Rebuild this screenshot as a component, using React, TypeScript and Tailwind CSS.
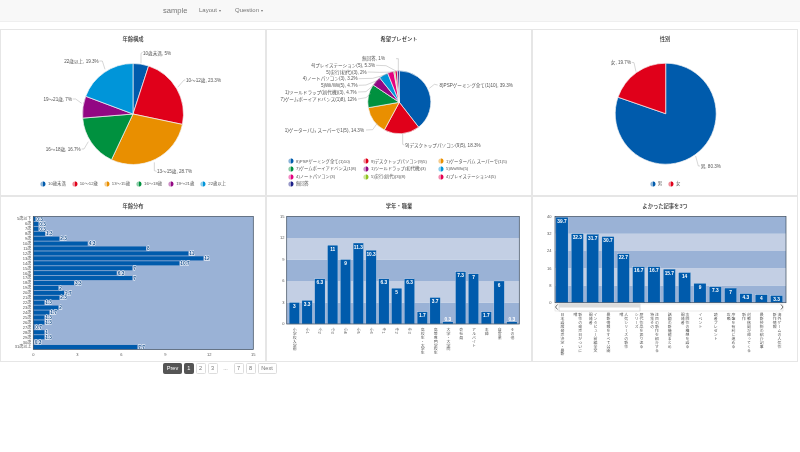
import React from "react";

const C = {
  blue: "#005bac", red: "#e0001a", orange: "#e98f00", green: "#00913f", purple: "#920783",
  sky: "#0095d9", magenta: "#e4007f", olive: "#8fc31f", pink: "#e5004f", navy: "#1d2088",
};
const DARK_BAND = "#9ab2d6";
const LIGHT_BAND = "#c3cfe4";
const AXIS = "#3b4a5c";
const TEXT = "#555";

type Slice = { v: number; c: string };
type Lab = { t: string; x: number; y: number; a: "start" | "end"; line: string };

function Marker({ c }: { c: string }) {
  return (
    <svg width="6" height="6" viewBox="0 0 6 6" className="shrink-0">
      <circle cx="3" cy="3" r="2.6" fill={c} opacity="0.45" />
      <path d="M3 0.6a2.4 2.4 0 0 1 0 4.8z" fill={c} />
    </svg>
  );
}

function Pie({ cx, cy, r, slices, labels }: { cx: number; cy: number; r: number; slices: Slice[]; labels: Lab[] }) {
  const total = slices.reduce((s, x) => s + x.v, 0);
  let acc = 0;
  return (
    <>
      {slices.map((s, i) => {
        const a0 = (acc / total) * Math.PI * 2;
        acc += s.v;
        const a1 = (acc / total) * Math.PI * 2;
        const large = a1 - a0 > Math.PI ? 1 : 0;
        const d = `M${cx} ${cy}L${cx + r * Math.sin(a0)} ${cy - r * Math.cos(a0)}A${r} ${r} 0 ${large} 1 ${cx + r * Math.sin(a1)} ${cy - r * Math.cos(a1)}Z`;
        return <path key={i} d={d} fill={s.c} stroke="#f4f4f4" strokeWidth="0.7" />;
      })}
      {labels.map((l, i) => (
        <g key={i}>
          <path d={l.line} fill="none" stroke="#999" strokeWidth="0.4" />
          <text x={l.x} y={l.y + 1.6} textAnchor={l.a} fontSize="4.6" fill={TEXT}>{l.t}</text>
        </g>
      ))}
    </>
  );
}

const pts = (ox: number, oy: number, arr: number[][]) =>
  "M" + arr.map(([x, y]) => `${ox + x / 3} ${oy + y / 3}`).join("L");

const pie1: Slice[] = [
  { v: 5, c: C.blue }, { v: 23.3, c: C.red }, { v: 28.7, c: C.orange },
  { v: 16.7, c: C.green }, { v: 7, c: C.purple }, { v: 19.3, c: C.sky },
];
const pie1Labels: Lab[] = [
  { t: "10歳未満, 5%", x: 143, y: 53, a: "start", line: pts(0, 0, [[423, 190], [423, 160], [428, 157]]) },
  { t: "10～12歳, 23.3%", x: 186, y: 80, a: "start", line: pts(0, 0, [[533, 262], [552, 240], [556, 240]]) },
  { t: "13～15歳, 28.7%", x: 157, y: 171, a: "start", line: pts(0, 0, [[463, 487], [463, 512], [470, 514]]) },
  { t: "16～18歳, 16.7%", x: 80.7, y: 149, a: "end", line: pts(0, 0, [[265, 425], [252, 447], [245, 447]]) },
  { t: "19～21歳, 7%", x: 72, y: 99, a: "end", line: pts(0, 0, [[245, 310], [227, 297], [218, 297]]) },
  { t: "22歳以上, 19.3%", x: 98.7, y: 61.5, a: "end", line: pts(0, 0, [[315, 208], [307, 183], [298, 183]]) },
];

const pie2: Slice[] = [
  { v: 39.3, c: C.blue }, { v: 18.3, c: C.red }, { v: 14.3, c: C.orange }, { v: 12, c: C.green },
  { v: 4.9, c: C.purple }, { v: 4.7, c: C.sky }, { v: 3.2, c: C.magenta }, { v: 0.6, c: C.olive },
  { v: 1.2, c: C.pink }, { v: 1, c: C.navy },
];
const O2x = 266, O2y = 25;
const pie2Labels: Lab[] = [
  { t: "8)PSPゲーミング全て(1)10), 39.3%", x: 439.5, y: 85.5, a: "start", line: pts(O2x, O2y, [[490, 190], [505, 178], [515, 180]]) },
  { t: "9)デスクトップパソコン(9)5), 18.3%", x: 405.3, y: 145.7, a: "start", line: pts(O2x, O2y, [[410, 325], [410, 358], [415, 360]]) },
  { t: "1)ゲーターパム スーパーで1(5), 14.3%", x: 364, y: 130, a: "end", line: pts(O2x, O2y, [[335, 293], [320, 314], [300, 315]]) },
  { t: "7)ゲームボーイアドバンス(1)8), 12%", x: 356.7, y: 99, a: "end", line: pts(O2x, O2y, [[315, 205], [300, 218], [276, 222]]) },
  { t: "1)ツールドラップ(初代機)(3), 4.7%", x: 356.7, y: 92, a: "end", line: pts(O2x, O2y, [[332, 172], [300, 200], [276, 201]]) },
  { t: "5)Wii/Wii(5), 4.7%", x: 357.7, y: 85.3, a: "end", line: pts(O2x, O2y, [[350, 160], [300, 180], [278, 181]]) },
  { t: "4)ノートパソコン(3), 3.2%", x: 357.7, y: 78.7, a: "end", line: pts(O2x, O2y, [[372, 146], [320, 160], [278, 161]]) },
  { t: "5)実行(初代)(3), 2%", x: 366.7, y: 72, a: "end", line: pts(O2x, O2y, [[385, 141], [340, 142], [305, 141]]) },
  { t: "4)プレイステーション(5), 5.3%", x: 375, y: 65.3, a: "end", line: pts(O2x, O2y, [[390, 138], [360, 122], [330, 121]]) },
  { t: "無回答, 1%", x: 385, y: 58.7, a: "end", line: pts(O2x, O2y, [[397, 138], [397, 101], [390, 101]]) },
];
const legend2: [string, string][] = [
  ["8)PSPゲーミング全て(1)10)", C.blue], ["9)デスクトップパソコン(9)5)", C.red], ["1)ゲーターパム スーパーで(1)5)", C.orange],
  ["7)ゲームボーイアドバンス(1)8)", C.green], ["1)ツールドラップ(初代機)(3)", C.purple], ["5)Wii/Wii(5)", C.sky],
  ["4)ノートパソコン(3)", C.magenta], ["5)実行(初代)(3)(8)", C.olive], ["4)プレイステーション4(5)", C.pink],
  ["無回答", C.navy],
];

const pie3: Slice[] = [{ v: 80.3, c: C.blue }, { v: 19.7, c: C.red }];
const pie3Labels: Lab[] = [
  { t: "女, 19.7%", x: 631, y: 62.7, a: "end", line: pts(530, 25, [[318, 140], [312, 113], [305, 112]]) },
  { t: "男, 80.3%", x: 700.7, y: 166, a: "start", line: pts(530, 25, [[497, 393], [505, 423], [510, 423]]) },
];

// [age, label, bar end in 3x crop units]
const ages: [string, string, number][] = [
  ["5歳以下", "0.3", 106], ["6歳", "0.3", 115], ["7歳", "0.3", 115], ["8歳", "1.3", 135], ["9歳", "2.3", 178],
  ["10歳", "4.3", 263], ["11歳", "8", 438], ["12歳", "11", 565], ["13歳", "12", 610], ["14歳", "10.7", 538],
  ["15歳", "7", 397], ["16歳", "6.3", 350], ["17歳", "7", 397], ["18歳", "3.3", 222], ["19歳", "2", 175],
  ["20歳", "2.7", 192], ["21歳", "2.3", 178], ["22歳", "1.3", 133], ["23歳", "2", 175], ["24歳", "1.7", 148],
  ["25歳", "1.3", 133], ["26歳", "1.3", 133], ["27歳", "0.7", 103], ["28歳", "1", 133], ["29歳", "1.3", 133],
  ["30歳", "0.3", 101], ["31歳以上", "7.7", 412],
];

function AgeChart() {
  const x0 = 33.3, x1 = 253.3, y0 = 215.5, y1 = 348.5;
  const h = (y1 - y0) / ages.length;
  return (
    <>
      <rect x={x0} y={y0} width={x1 - x0} height={y1 - y0} fill={DARK_BAND} />
      {ages.map(([a, l, e], i) => {
        const y = y0 + h * i;
        const end = e / 3;
        return (
          <g key={a}>
            <rect x={x0} y={y + 0.4} width={end - x0} height={h - 0.8} fill={C.blue} />
            <text x={x0 - 2} y={y + h / 2 + 1.4} textAnchor="end" fontSize="4" fill={TEXT}>{a}</text>
            <text x={end + 1} y={y + h / 2 + 1.7} fontSize="4.8" fontWeight="700" fill="#17508f" stroke="#fff" strokeWidth="0.9" style={{ paintOrder: "stroke" }}>{l}</text>
          </g>
        );
      })}
      <rect x={x0} y={y0} width={x1 - x0} height={y1 - y0} fill="none" stroke={AXIS} strokeWidth="0.7" />
      {[0, 3, 6, 9, 12, 15].map((t) => (
        <text key={t} x={x0 + (t / 15) * (x1 - x0)} y={354.5} textAnchor="middle" fontSize="4" fill={TEXT}>{t}</text>
      ))}
    </>
  );
}

function ColumnChart({ x0, x1, y0, y1, max, ticks, bars, first, pitch, bw, labelY, labelX }: {
  x0: number; x1: number; y0: number; y1: number; max: number; ticks: number[];
  bars: { v: number; l: string; t: string[] }[]; first: number; pitch: number; bw: number; labelY: number; labelX: number;
}) {
  const sy = (y1 - y0) / max;
  const step = ticks[1];
  return (
    <>
      {ticks.slice(0, -1).map((t, i) => (
        <rect key={t} x={x0} y={y1 - (t + step) * sy} width={x1 - x0} height={step * sy} fill={i % 2 === 0 ? DARK_BAND : LIGHT_BAND} />
      ))}
      {bars.map((b, i) => {
        const cx = first + pitch * i;
        const top = y1 - b.v * sy;
        const small = b.v < 1;
        return (
          <g key={i}>
            <rect x={cx - bw / 2} y={top} width={bw} height={b.v * sy} fill={C.blue} stroke="#dfe7f2" strokeWidth="0.3" />
            <text x={cx} y={small ? top - 1 : top + 5.6} textAnchor="middle" fontSize="4.8" fontWeight="700" fill="#fff">{b.l}</text>
            {b.t.map((line, k) => (
              <text key={k} x={cx - (b.t.length - 1) * 2.4 + k * 4.8} y={labelY} fontSize="3.9" fill={TEXT} writingMode="vertical-rl" textAnchor="start" dominantBaseline="central">{line}</text>
            ))}
          </g>
        );
      })}
      <rect x={x0} y={y0} width={x1 - x0} height={y1 - y0} fill="none" stroke={AXIS} strokeWidth="0.7" />
      {ticks.map((t) => (
        <text key={t} x={labelX} y={y1 - t * sy + 1.4} textAnchor="end" fontSize="4" fill={TEXT}>{t}</text>
      ))}
    </>
  );
}

const grade = [
  [3, "3", "小学校入学前"], [3.3, "3.3", "小1"], [6.3, "6.3", "小2"], [11, "11", "小3"], [9, "9", "小4"], [11.3, "11.3", "小5"],
  [10.3, "10.3", "小6"], [6.3, "6.3", "中1"], [5, "5", "中2"], [6.3, "6.3", "中3"], [1.7, "1.7", "高校生・大学生"], [3.7, "3.7", "高等専門学校生"],
  [0.3, "0.3", "大学・大学院"], [7.3, "7.3", "会社員"], [7, "7", "アルバイト"], [1.7, "1.7", "主婦"], [6, "6", "自営業"], [0.3, "0.3", "その他"],
].map(([v, l, t]) => ({ v: v as number, l: l as string, t: [t as string] }));

const articles = [
  [39.7, "39.7", ["日本語版発売決定・最新"]],
  [32, "32.3", ["噂", "新作の発売日がついに"]],
  [31.8, "31.7", ["開発者", "インタビュー前編全文"]],
  [30.7, "30.7", ["最新情報をすべて公開"]],
  [22.7, "22.7", ["噂", "人気シリーズの新作"]],
  [16.7, "16.7", ["シリーズ", "歴代作品を振り返る"]],
  [16.7, "16.7", ["特集その", "注目の新作を紹介する"]],
  [15.6, "15.7", ["話題の新機能まとめ"]],
  [14, "14", ["開発者", "次回作の構想を語る"]],
  [9, "9", ["イベント"]],
  [7.4, "7.3", ["読者プレゼント"]],
  [6.8, "7", ["攻略", "序盤を有利に進める"]],
  [4.2, "4.3", ["新作", "対戦格闘が帰ってくる"]],
  [3.7, "4", ["最新技術の紹介記事"]],
  [3.3, "3.3", ["新作情報", "海外ゲームの人気作"]],
].map(([v, l, t]) => ({ v: v as number, l: l as string, t: t as string[] }));

function Scrollbar() {
  return (
    <g>
      <rect x={555} y={303} width={228} height={7} fill="#fff" stroke="#ccc" strokeWidth="0.4" />
      <rect x={559} y={303} width={81} height={7} fill="#fff" stroke="#aaa" strokeWidth="0.4" />
      <rect x={559} y={303} width={81} height={3.5} fill="#dcdcdc" />
      <path d="M557.5 303.5l-2 2.5 2 2.5" fill="none" stroke="#333" strokeWidth="0.7" />
      <path d="M781 303.5l2 2.5-2 2.5" fill="none" stroke="#333" strokeWidth="0.7" />
    </g>
  );
}

function Panel({ title, children, cls }: { title: string; children: React.ReactNode; cls?: string }) {
  return (
    <div className={"flex flex-col border border-[#e6e6e6] " + (cls ?? "")}>
      <div className="h-[20px] shrink-0 flex items-center justify-center text-[5.3px] font-medium text-[#333]">{title}</div>
      {children}
    </div>
  );
}

function Legend({ items }: { items: [string, string][] }) {
  return (
    <div className="mt-auto mb-[7px] flex justify-center gap-[6px] text-[4.3px] leading-[7.6px] text-[#555]">
      {items.map(([t, c]) => (
        <span key={t} className="flex items-center gap-[2px]"><Marker c={c} />{t}</span>
      ))}
    </div>
  );
}

const PageBtn = ({ t, active, w }: { t: string; active?: boolean; w: string }) => (
  <span className={`${w} h-[11px] flex items-center justify-center rounded-[1.5px] border text-[5.6px] ${active ? "bg-[#555] border-[#555] text-white" : "bg-white border-[#ddd] text-[#777]"}`}>{t}</span>
);

export default function App() {
  return (
    <div className="w-[800px] h-[452px] overflow-hidden bg-white blur-[0.3px] font-['Liberation_Sans','Noto_Sans_CJK_JP',sans-serif]">
      <nav className="h-[22px] mb-[7px] bg-[#f8f8f8] border-b border-[#efefef] flex items-center pl-[163px] text-[#777]">
        <span className="text-[7.6px] w-[36px]">sample</span>
        <span className="text-[6px] w-[36px] flex items-center gap-[2px]">Layout<i className="border-x-[1.5px] border-x-transparent border-t-[2px] border-t-[#777]" /></span>
        <span className="text-[6px] flex items-center gap-[2px]">Question<i className="border-x-[1.5px] border-x-transparent border-t-[2px] border-t-[#777]" /></span>
      </nav>

      <div className="grid grid-cols-[266px_266px_266px] grid-rows-[167px_166px]">
        <Panel title="年齢構成">
          <svg width="264" height="125" viewBox="1 50 264 125" className="overflow-visible">
            <Pie cx={133} cy={114} r={50.5} slices={pie1} labels={pie1Labels} />
          </svg>
          <Legend items={[["10歳未満", C.blue], ["10～12歳", C.red], ["13～15歳", C.orange], ["16～18歳", C.green], ["19～21歳", C.purple], ["22歳以上", C.sky]]} />
        </Panel>

        <Panel title="希望プレゼント">
          <svg width="264" height="100" viewBox="267 50 264 100" className="overflow-visible">
            <Pie cx={399.3} cy={102.3} r={31.5} slices={pie2} labels={pie2Labels} />
          </svg>
          <div className="mt-auto mb-[7px] ml-[21px] grid grid-cols-[75px_75px_75px] text-[4.3px] leading-[7.6px] text-[#555]">
            {legend2.map(([t, c]) => (
              <span key={t} className="flex items-center gap-[2px] whitespace-nowrap"><Marker c={c} />{t}</span>
            ))}
          </div>
        </Panel>

        <Panel title="性別">
          <svg width="264" height="125" viewBox="533 50 264 125" className="overflow-visible">
            <Pie cx={665.7} cy={113.7} r={50.5} slices={pie3} labels={pie3Labels} />
          </svg>
          <Legend items={[["男", C.blue], ["女", C.red]]} />
        </Panel>

        <Panel title="年齢分布">
          <svg width="264" height="144" viewBox="1 216 264 144" className="overflow-visible">
            <AgeChart />
          </svg>
        </Panel>

        <Panel title="学年・職業">
          <svg width="264" height="144" viewBox="267 216 264 144" className="overflow-visible">
            <ColumnChart x0={286.7} x1={519.3} y0={215.5} y1={323} max={15} ticks={[0, 3, 6, 9, 12, 15]} bars={grade} first={294.3} pitch={12.8} bw={10.4} labelY={326.5} labelX={284.5} />
          </svg>
        </Panel>

        <Panel title="よかった記事を3つ">
          <svg width="264" height="144" viewBox="533 216 264 144" className="overflow-visible">
            <ColumnChart x0={555} x1={786} y0={215.5} y1={301.7} max={40} ticks={[0, 8, 16, 24, 32, 40]} bars={articles} first={562} pitch={15.33} bw={12.2} labelY={312} labelX={551.5} />
            <Scrollbar />
          </svg>
        </Panel>
      </div>

      <div className="mt-px pl-[163px] flex items-center gap-[2px]">
        <PageBtn t="Prev" active w="w-[19px]" />
        <PageBtn t="1" active w="w-[9.5px]" />
        <PageBtn t="2" w="w-[10px]" />
        <PageBtn t="3" w="w-[10px]" />
        <span className="w-[12px] text-center text-[5.6px] text-[#777]">...</span>
        <PageBtn t="7" w="w-[10px]" />
        <PageBtn t="8" w="w-[10px]" />
        <PageBtn t="Next" w="w-[19px]" />
      </div>
    </div>
  );
}
